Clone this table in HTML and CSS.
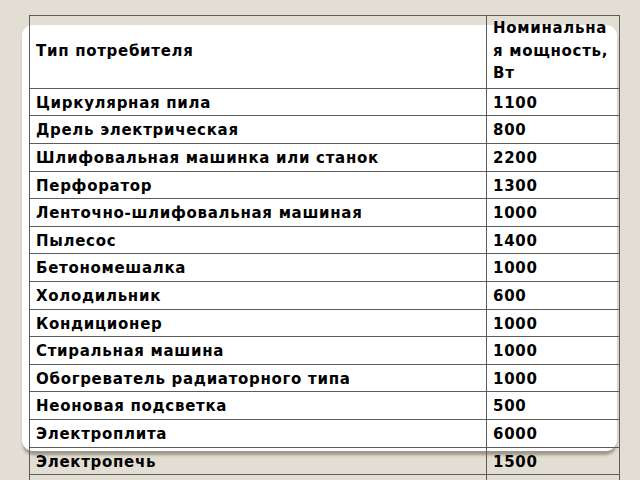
FILE: index.html
```html
<!DOCTYPE html>
<html lang="ru">
<head>
<meta charset="utf-8">
<link rel="stylesheet" href="styles.css">
</head>
<body>
<div class="stage">
  <div class="card"></div>
  <table class="power">
    <colgroup><col class="c1"><col class="c2"></colgroup>
    <tr class="head"><td>Тип потребителя</td><td class="wrap">Номинальная мощность, Вт</td></tr>
    <tr><td>Циркулярная пила</td><td>1100</td></tr>
    <tr><td>Дрель электрическая</td><td>800</td></tr>
    <tr><td>Шлифовальная машинка или станок</td><td>2200</td></tr>
    <tr><td>Перфоратор</td><td>1300</td></tr>
    <tr><td>Ленточно-шлифовальная машиная</td><td>1000</td></tr>
    <tr><td>Пылесос</td><td>1400</td></tr>
    <tr><td>Бетономешалка</td><td>1000</td></tr>
    <tr><td>Холодильник</td><td>600</td></tr>
    <tr><td>Кондиционер</td><td>1000</td></tr>
    <tr><td>Стиральная машина</td><td>1000</td></tr>
    <tr><td>Обогреватель радиаторного типа</td><td>1000</td></tr>
    <tr><td>Неоновая подсветка</td><td>500</td></tr>
    <tr><td>Электроплита</td><td>6000</td></tr>
    <tr><td>Электропечь</td><td>1500</td></tr>
    <tr><td>&nbsp;</td><td>&nbsp;</td></tr>
  </table>
</div>
</body>
</html>
```
FILE: styles.css
```css
html, body {
  margin: 0;
  padding: 0;
  background: #e3ded4;
  overflow: hidden;
}
.stage {
  position: relative;
  width: 640px;
  height: 480px;
  padding: 15px 0 0 29px;
  box-sizing: border-box;
}
.card {
  position: absolute;
  left: 22px;
  top: 25px;
  width: 595px;
  height: 426px;
  background: #ffffff;
  border-radius: 11px;
  box-shadow: 0 5px 3px -1px rgba(90, 80, 65, 0.5);
}
.power {
  position: relative;
  border-collapse: collapse;
  table-layout: fixed;
  width: 591px;
  font-family: "DejaVu Sans", sans-serif;
  font-weight: bold;
  font-size: 15px;
  letter-spacing: 0.7px;
  color: #000;
  border: 1px solid #5c5c5c;
}
.c1 { width: 457px; }
.power td {
  border: 1px solid #5c5c5c;
  padding: 3px 7px 1px 6px;
  line-height: 22.6px;
  vertical-align: top;
  white-space: nowrap;
}
.power .head td {
  vertical-align: middle;
  padding-bottom: 3px;
  padding-top: 1px;
}
.power td.wrap {
  white-space: normal;
  word-break: break-all;
}
```
